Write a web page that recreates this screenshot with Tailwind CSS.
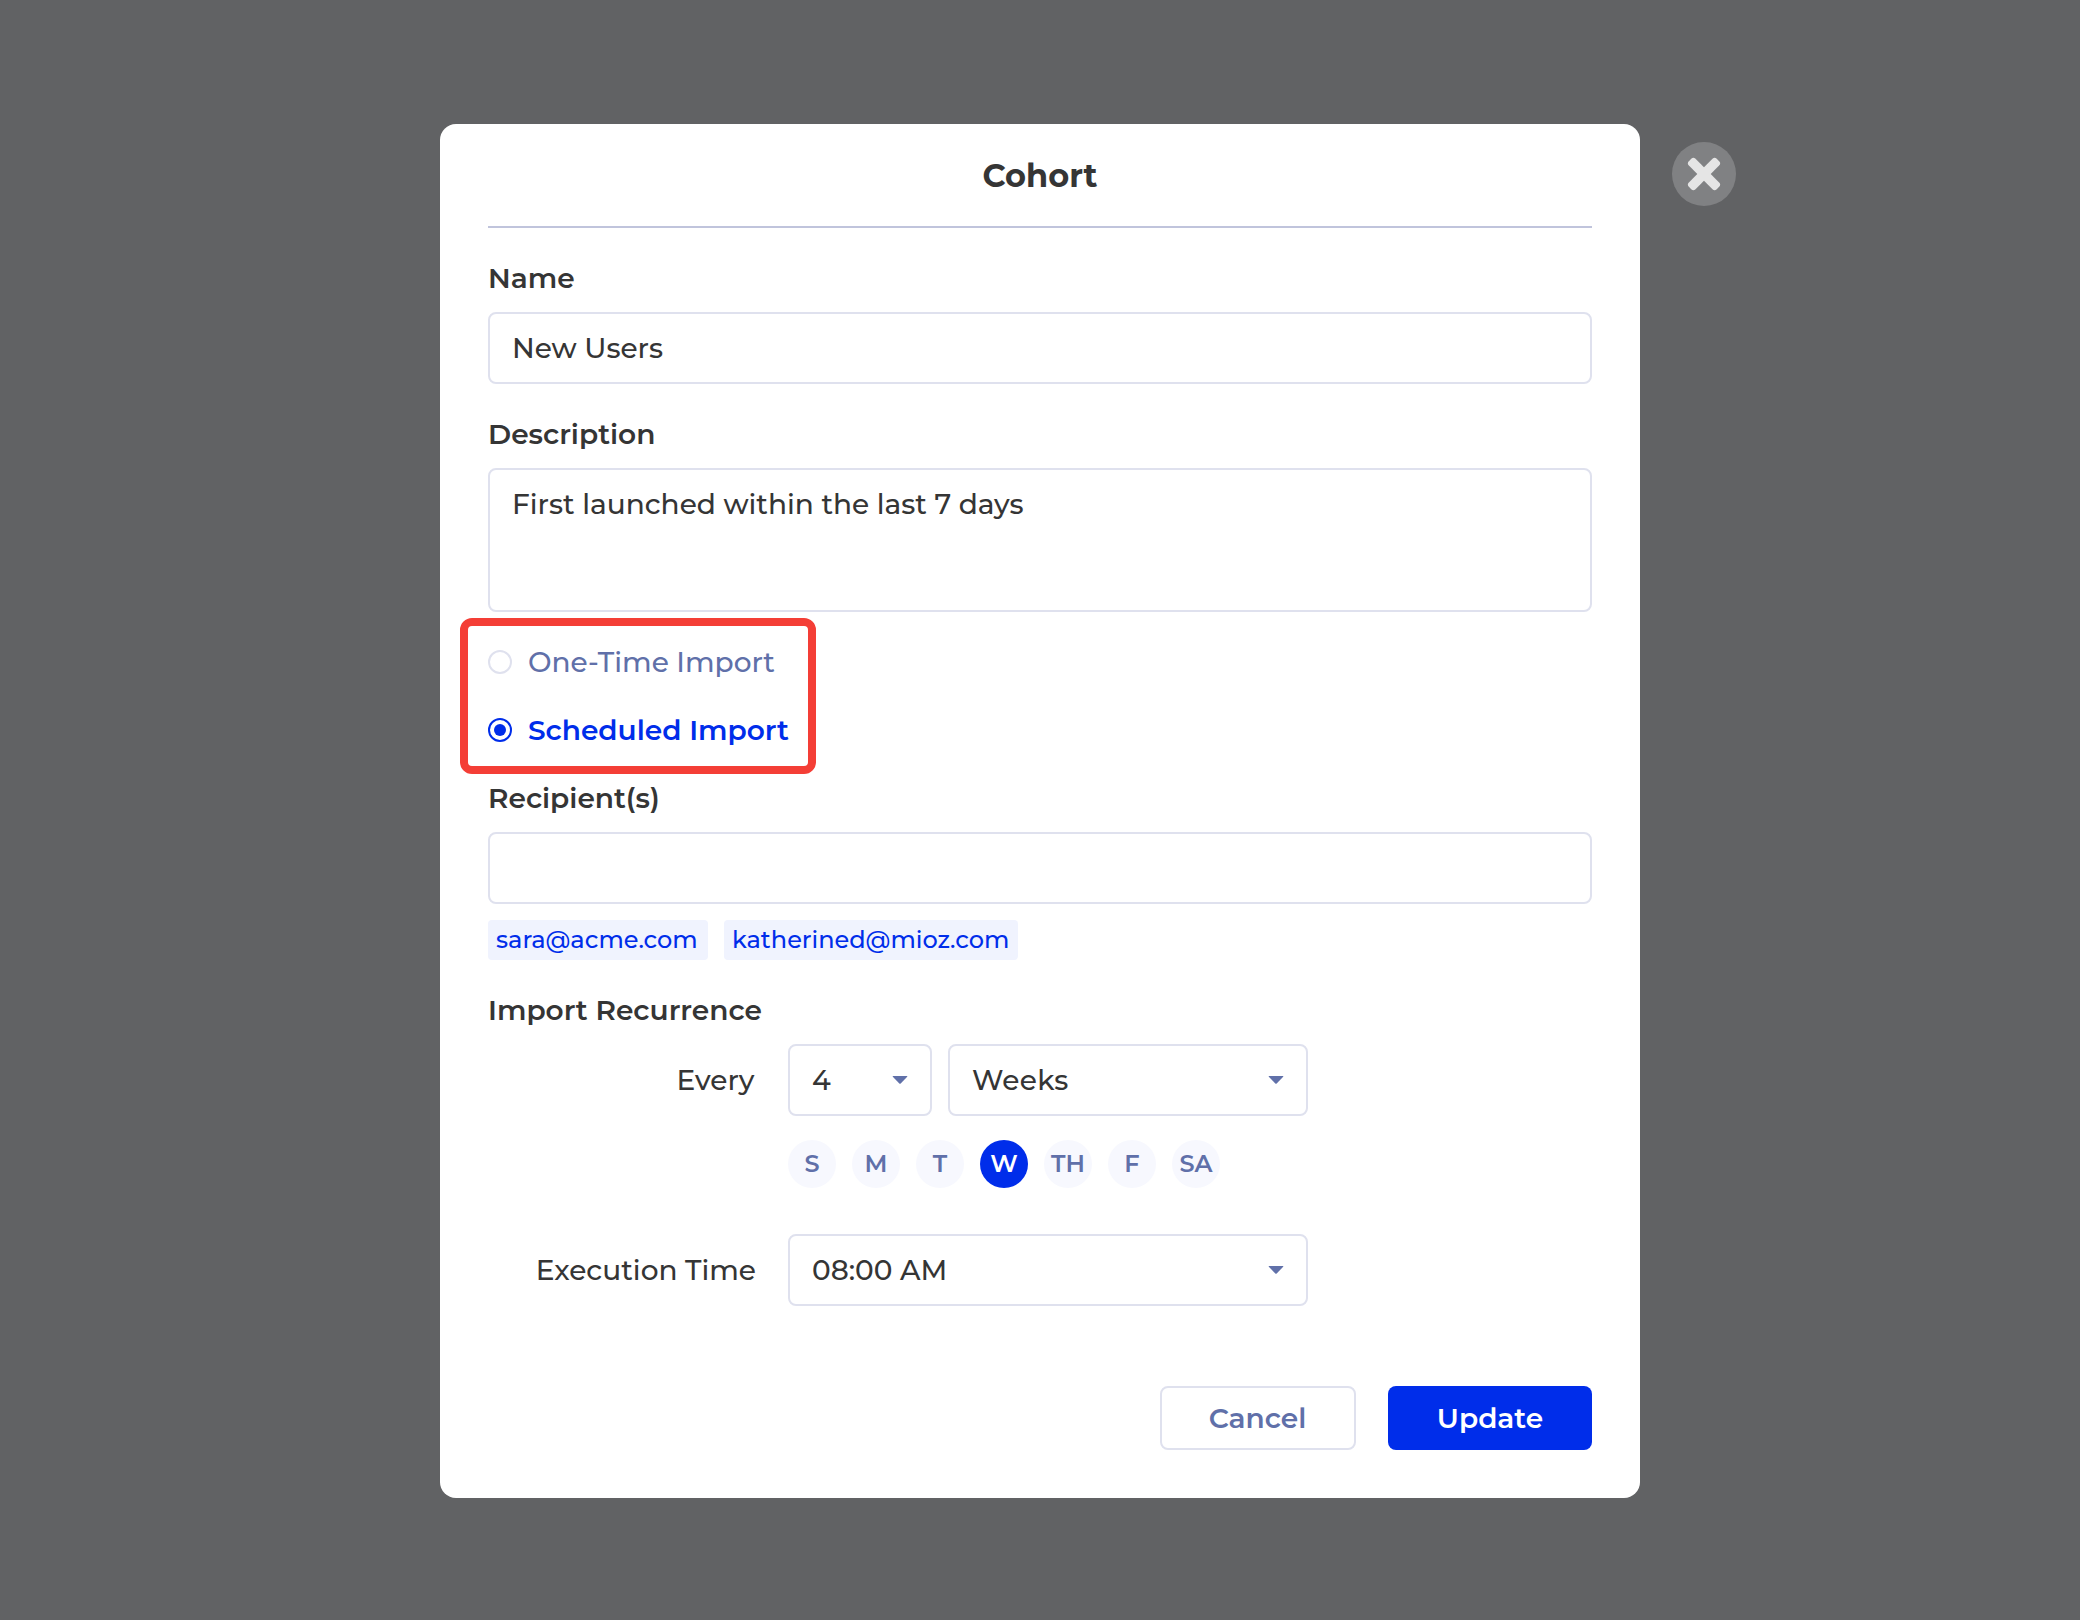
<!DOCTYPE html>
<html lang="en">
<head>
<meta charset="utf-8">
<title>Cohort</title>
<script src="https://cdn.jsdelivr.net/npm/@tailwindcss/browser@4"></script>
</head>
<body class="min-h-screen overflow-hidden bg-[#616264] font-[Montserrat,Inter,sans-serif] text-[28px] leading-9 font-medium text-[#353535] antialiased">
<div class="flex justify-center pt-[124px]">
  <div class="relative h-[1374px] w-[1200px] rounded-2xl bg-white px-12 pb-12">
    <button aria-label="Close" class="absolute top-[18px] left-[1232px] flex size-16 items-center justify-center rounded-full bg-[#808183]">
      <svg class="size-10" viewBox="-20 -20 40 40" fill="#e5e5e5"><rect x="-19.7" y="-4.7" width="39.4" height="9.4" rx="3" transform="rotate(45)"/><rect x="-19.7" y="-4.7" width="39.4" height="9.4" rx="3" transform="rotate(-45)"/></svg>
    </button>

    <h1 class="flex h-[104px] items-center justify-center border-b-2 border-[#c0c4dc] pt-0.5 text-[32px] font-bold">Cohort</h1>

    <div class="mt-8 font-semibold">Name</div>
    <div class="mt-4 flex h-[72px] items-center rounded-lg border-2 border-[#dfe1ee] px-[22px]">New Users</div>

    <div class="mt-8 font-semibold">Description</div>
    <div class="mt-4 h-36 rounded-lg border-2 border-[#dfe1ee] px-[22px] py-4">First launched within the last 7 days</div>

    <div class="relative mt-8 flex flex-col gap-8">
      <div class="absolute -top-[26px] -left-7 h-[156px] w-[356px] rounded-xl border-8 border-[#f43e36]"></div>
      <div class="flex items-center gap-4 text-[#6070a9]">
        <span class="size-6 rounded-full border-2 border-[#dfe1ee]"></span>
        <span>One-Time Import</span>
      </div>
      <div class="flex items-center gap-4 text-[#002dea]">
        <span class="flex size-6 items-center justify-center rounded-full border-2 border-[#002dea]"><span class="size-3 rounded-full bg-[#002dea]"></span></span>
        <span class="font-semibold">Scheduled Import</span>
      </div>
    </div>

    <div class="mt-8 font-semibold">Recipient(s)</div>
    <div class="mt-4 h-[72px] rounded-lg border-2 border-[#dfe1ee]"></div>
    <div class="mt-4 flex gap-4 text-[24px] text-[#002dea]">
      <span class="flex h-10 w-[220px] items-center rounded bg-[#f0f3fe] pl-2">sara@acme.com</span>
      <span class="flex h-10 w-[294px] items-center rounded bg-[#f0f3fe] pl-2">katherined@mioz.com</span>
    </div>

    <div class="mt-8 font-semibold">Import Recurrence</div>
    <div class="mt-4 flex h-[72px] items-center">
      <div class="mr-8 w-[268px] pr-[1.5px] text-right">Every</div>
      <div class="mr-4 flex h-full w-36 items-center justify-between rounded-lg border-2 border-[#dfe1ee] px-[22px]">
        <span>4</span>
        <svg class="h-2 w-4" viewBox="0 0 16 8" fill="#6070a9"><path d="M1 0h14q.6.3.2.8L8.7 7.5q-.7.6-1.4 0L.8.8Q.4.3 1 0z"/></svg>
      </div>
      <div class="flex h-full w-[360px] items-center justify-between rounded-lg border-2 border-[#dfe1ee] px-[22px]">
        <span class="tracking-[0.3px]">Weeks</span>
        <svg class="h-2 w-4" viewBox="0 0 16 8" fill="#6070a9"><path d="M1 0h14q.6.3.2.8L8.7 7.5q-.7.6-1.4 0L.8.8Q.4.3 1 0z"/></svg>
      </div>
    </div>
    <div class="mt-6 ml-[300px] flex gap-4 text-[24px] font-semibold text-[#6070a9]">
      <span class="flex size-12 items-center justify-center rounded-full bg-[#f7f8fe]">S</span>
      <span class="flex size-12 items-center justify-center rounded-full bg-[#f7f8fe]">M</span>
      <span class="flex size-12 items-center justify-center rounded-full bg-[#f7f8fe]">T</span>
      <span class="flex size-12 items-center justify-center rounded-full bg-[#002dea] text-white">W</span>
      <span class="flex size-12 items-center justify-center rounded-full bg-[#f7f8fe]">TH</span>
      <span class="flex size-12 items-center justify-center rounded-full bg-[#f7f8fe]">F</span>
      <span class="flex size-12 items-center justify-center rounded-full bg-[#f7f8fe]">SA</span>
    </div>
    <div class="mt-[46px] flex h-[72px] items-center">
      <div class="mr-8 w-[268px] text-right">Execution Time</div>
      <div class="flex h-full w-[520px] items-center justify-between rounded-lg border-2 border-[#dfe1ee] px-[22px]">
        <span>08:00 AM</span>
        <svg class="h-2 w-4" viewBox="0 0 16 8" fill="#6070a9"><path d="M1 0h14q.6.3.2.8L8.7 7.5q-.7.6-1.4 0L.8.8Q.4.3 1 0z"/></svg>
      </div>
    </div>

    <div class="mt-20 flex h-16 justify-end gap-8 font-semibold">
      <button class="flex w-[196px] items-center justify-center rounded-lg border-2 border-[#dfe1ee] pr-px text-[#6070a9]">Cancel</button>
      <button class="flex w-[204px] items-center justify-center rounded-lg bg-[#002dea] text-white">Update</button>
    </div>
  </div>
</div>
</body>
</html>
